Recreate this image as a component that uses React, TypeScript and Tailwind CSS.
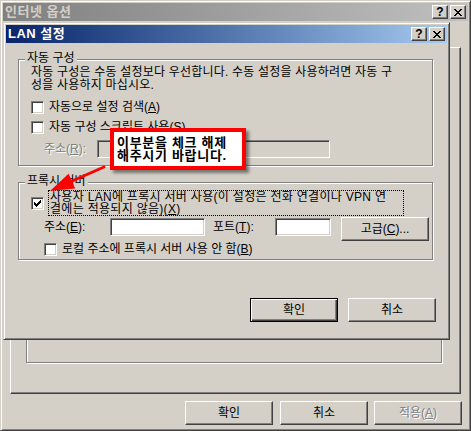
import React from "react";

const winFrame =
  "border border-t-[#d4d0c8] border-l-[#d4d0c8] border-r-[#404040] border-b-[#404040] shadow-[inset_1px_1px_0_#fff,inset_-1px_-1px_0_#808080] p-[2px] bg-[#d4d0c8]";
const raised =
  "border border-t-white border-l-white border-r-[#404040] border-b-[#404040] shadow-[inset_-1px_-1px_0_#808080] bg-[#d4d0c8]";
const sunken =
  "border border-t-[#808080] border-l-[#808080] border-r-white border-b-white shadow-[inset_1px_1px_0_#404040,inset_-1px_-1px_0_#d4d0c8]";
const etched = "border border-[#808080] shadow-[1px_1px_0_#fff,inset_1px_1px_0_#fff]";
const disabledText = "text-[#808080] [text-shadow:1px_1px_0_#fff]";

function XGlyph() {
  return (
    <svg width="8" height="7" viewBox="0 0 8 7" shapeRendering="crispEdges" className="block">
      <path
        fill="#000"
        d="M0 0h2v1h-2z M6 0h2v1h-2z M1 1h2v1h-2z M5 1h2v1h-2z M2 2h4v1h-4z M3 3h2v1h-2z M2 4h4v1h-4z M1 5h2v1h-2z M5 5h2v1h-2z M0 6h2v1h-2z M6 6h2v1h-2z"
      />
    </svg>
  );
}

function CapBtn({ children }: { children: React.ReactNode }) {
  return (
    <div className={`w-[16px] h-[14px] flex items-center justify-center ${raised}`}>{children}</div>
  );
}

function TitleBar({ title, active }: { title: string; active: boolean }) {
  return (
    <div
      className={`h-[18px] shrink-0 flex items-center justify-between pl-[2px] pr-[2px] ${
        active
          ? "bg-linear-to-r from-[#0a246a] to-[#a6caf0] text-white"
          : "bg-linear-to-r from-[#808080] to-[#c0c0c0] text-[#d4d0c8]"
      }`}
    >
      <span className="font-bold text-[13px] leading-[14px] tracking-[0.5px]">{title}</span>
      <div className="flex gap-[2px]">
        <CapBtn>
          <span className="font-['Liberation_Sans',sans-serif] font-bold text-[12px] leading-[10px] text-black">?</span>
        </CapBtn>
        <CapBtn>
          <XGlyph />
        </CapBtn>
      </div>
    </div>
  );
}

function Checkbox({ checked }: { checked?: boolean }) {
  return (
    <div className={`w-[13px] h-[13px] shrink-0 bg-white ${sunken}`}>
      {checked && (
        <svg width="7" height="7" viewBox="0 0 7 7" shapeRendering="crispEdges" className="block ml-[2px] mt-[2px]">
          <path
            fill="#000"
            d="M0 2h1v3h-1z M1 3h1v3h-1z M2 4h1v3h-1z M3 3h1v3h-1z M4 2h1v3h-1z M5 1h1v3h-1z M6 0h1v3h-1z"
          />
        </svg>
      )}
    </div>
  );
}

function Button({
  children,
  isDefault,
  className = "",
}: {
  children: React.ReactNode;
  isDefault?: boolean;
  className?: string;
}) {
  const cls = isDefault
    ? "border border-black bg-[#d4d0c8] shadow-[inset_1px_1px_0_#fff,inset_-1px_-1px_0_#404040,inset_-2px_-2px_0_#808080]"
    : raised;
  return (
    <div className={`w-[88px] h-[24px] flex items-center justify-center ${cls} ${className}`}>{children}</div>
  );
}

function GroupLabel({ children }: { children: React.ReactNode }) {
  return (
    <div className="absolute left-[6px] -top-[8px] px-[2px] bg-[#d4d0c8] leading-[13px]">{children}</div>
  );
}

export default function App() {
  return (
    <div className="relative w-[471px] h-[431px] overflow-hidden bg-[#d4d0c8] font-['Liberation_Sans','Noto_Sans_CJK_KR',sans-serif] text-[12px] leading-[13px] text-black">
      {/* Outer window: 인터넷 옵션 */}
      <div className={`${winFrame} w-full h-full flex flex-col`}>
        <TitleBar title="인터넷 옵션" active={false} />
        <div className={`mx-[7px] mt-[26px] h-[347px] shrink-0 pt-[52px] pl-[15px] ${raised}`}>
          <div className={`w-[416px] h-[263px] ${etched}`} />
        </div>
        <div className="flex justify-end pr-[6px] mt-[7px]">
          <Button>확인</Button>
          <Button className="ml-[7px]">취소</Button>
          <Button className="ml-[6px]">
            <span className={disabledText}>
              적용(<u>A</u>)
            </span>
          </Button>
        </div>
      </div>

      {/* LAN 설정 dialog */}
      <div className={`absolute left-[3px] top-[22px] w-[447px] h-[318px] flex flex-col ${winFrame}`}>
        <TitleBar title="LAN 설정" active />

        {/* 자동 구성 */}
        <div className={`relative ml-[12px] mt-[16px] w-[415px] pl-[12px] pt-[6px] pb-[7px] ${etched}`}>
          <GroupLabel>자동 구성</GroupLabel>
          <div className="whitespace-nowrap tracking-[0.2px]">
            <div>자동 구성은 수동 설정보다 우선합니다. 수동 설정을 사용하려면 자동 구</div>
            <div>성을 사용하지 마십시오.</div>
          </div>
          <div className="mt-[9px] h-[13px] flex items-center gap-[5px]">
            <Checkbox />
            <span>
              자동으로 설정 검색(<u>A</u>)
            </span>
          </div>
          <div className="mt-[7px] h-[13px] flex items-center gap-[5px]">
            <Checkbox />
            <span>
              자동 구성 스크립트 사용(<u>S</u>)
            </span>
          </div>
          <div className="mt-[6px] h-[18px] flex items-center pl-[13px]">
            <span className={`w-[53px] ${disabledText}`}>
              주소(<u>R</u>):
            </span>
            <div className={`w-[233px] h-[18px] bg-[#d4d0c8] ${sunken}`} />
          </div>
        </div>

        {/* 프록시 서버 */}
        <div className={`relative ml-[12px] mt-[16px] w-[415px] pt-[7px] pb-[3px] ${etched}`}>
          <GroupLabel>프록시 서버</GroupLabel>
          <div className="flex items-center pl-[12px] gap-[4px]">
            <Checkbox checked />
            <div className="w-[356px] h-[26px] border border-dotted border-black flex flex-col justify-center pl-[1px] leading-[12.5px] whitespace-nowrap tracking-[0.3px]">
              <div>사용자 LAN에 프록시 서버 사용(이 설정은 전화 연결이나 VPN 연</div>
              <div>
                결에는 적용되지 않음)(<u>X</u>)
              </div>
            </div>
          </div>
          <div className="mt-[1px] h-[24px] flex items-start pl-[25px]">
            <span className="w-[66px] h-[18px] mt-[1px] flex items-center">
              주소(<u>E</u>):
            </span>
            <div className={`w-[95px] h-[18px] mt-[1px] bg-white ${sunken}`} />
            <span className="ml-[8px] w-[62px] h-[18px] mt-[1px] flex items-center">
              포트(<u>T</u>):
            </span>
            <div className={`w-[56px] h-[18px] mt-[1px] bg-white ${sunken}`} />
            <Button className="ml-[10px]">
              고급(<u>C</u>)...
            </Button>
          </div>
          <div className="mt-[2px] h-[13px] flex items-center pl-[25px] gap-[5px]">
            <Checkbox />
            <span>
              로컬 주소에 프록시 서버 사용 안 함(<u>B</u>)
            </span>
          </div>
        </div>

        <div className="mt-[38px] flex justify-end pr-[11px] gap-[10px]">
          <Button isDefault>확인</Button>
          <Button>취소</Button>
        </div>
      </div>

      {/* Annotation callout */}
      <div className="absolute left-[110px] top-[128px] w-[136px] h-[42px] border-[4px] border-[#ff0000] bg-white shadow-[3px_3px_3px_rgba(0,0,0,0.45)] flex flex-col justify-center pl-[3px] font-bold text-[13px] leading-[13px] tracking-[0.7px] whitespace-nowrap">
        <div>이부분을 체크 해제</div>
        <div>해주시기 바랍니다.</div>
      </div>
      <svg className="absolute left-[40px] top-[160px]" width="75" height="40" viewBox="0 0 75 40">
        <line x1="64" y1="7" x2="31" y2="21.5" stroke="#ff0000" strokeWidth="3" strokeLinecap="round" />
        <polygon points="10,31 35.2,28.4 28.6,13.8" fill="#ff0000" />
      </svg>
    </div>
  );
}
